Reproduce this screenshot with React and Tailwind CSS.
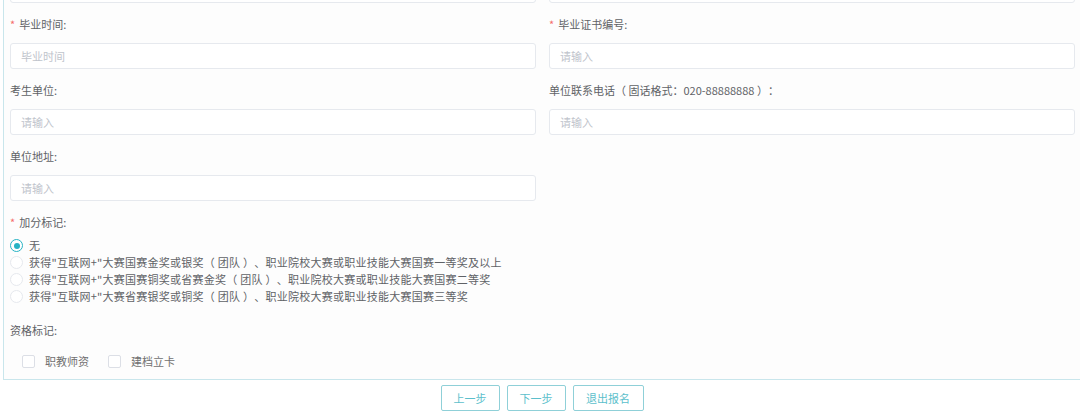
import React from 'react';

const font = { fontFamily: '"Noto Sans CJK SC", "Noto Sans", sans-serif' };

const Field = ({ label, required, placeholder }) => (
  <div className="flex flex-col">
    <div className="h-[20px] leading-[20px] text-[11px] text-[#606266] whitespace-nowrap">
      {required && <span className="text-[#f56c6c] mr-[4px]">*</span>}
      {label}
    </div>
    <div className="mt-[9px] h-[26px] border border-[#e6e9ee] rounded-[3px] bg-white flex items-center px-[10px] text-[11px] text-[#c0c4cc]">
      {placeholder}
    </div>
  </div>
);

const Radio = ({ checked, children }) => (
  <div className="h-[17px] flex items-center">
    <span
      className={`w-[13px] h-[13px] rounded-full border flex items-center justify-center bg-white ${
        checked ? 'border-[#26b3c4]' : 'border-[#e6e9ee]'
      }`}
    >
      {checked && <span className="w-[6px] h-[6px] rounded-full bg-[#26b3c4]" />}
    </span>
    <span className="ml-[6px] text-[11px] tracking-[0.25px] text-[#606266] whitespace-nowrap">{children}</span>
  </div>
);

const Check = ({ children }) => (
  <div className="flex items-center">
    <span className="w-[13px] h-[13px] border border-[#dcdfe6] rounded-[2px] bg-white" />
    <span className="ml-[10px] text-[11px] text-[#707070]">{children}</span>
  </div>
);

export default function App() {
  const options = [
    '获得"互联网+"大赛国赛金奖或银奖（ 团队 ）、职业院校大赛或职业技能大赛国赛一等奖及以上',
    '获得"互联网+"大赛国赛铜奖或省赛金奖（ 团队 ）、职业院校大赛或职业技能大赛国赛二等奖',
    '获得"互联网+"大赛省赛银奖或铜奖（ 团队 ）、职业院校大赛或职业技能大赛国赛三等奖'
  ];

  return (
    <div className="w-[1080px] h-[415px] overflow-hidden bg-white [text-spacing-trim:space-all]" style={font}>
      {/* Form panel */}
      <div className="ml-[3px] mr-[-20px] -mt-[52px] border-l border-b border-[#c9e6ec] bg-[#fdfdfd] pl-[6px] pb-[8px]">
        <div className="grid grid-cols-[526px_526px] gap-x-[13px] gap-y-[11px]">
          <Field label="" placeholder="" />
          <Field label="" placeholder="" />
          <Field label="毕业时间:" required placeholder="毕业时间" />
          <Field label="毕业证书编号:" required placeholder="请输入" />
          <Field label="考生单位:" placeholder="请输入" />
          <Field label="单位联系电话（ 固话格式：020-88888888 ）：" placeholder="请输入" />
          <Field label="单位地址:" placeholder="请输入" />
        </div>

        {/* Bonus mark */}
        <div className="mt-[11px] h-[20px] leading-[20px] text-[11px] text-[#606266]">
          <span className="text-[#f56c6c] mr-[4px]">*</span>加分标记:
        </div>
        <div className="mt-[5px] flex flex-col">
          <Radio checked>无</Radio>
          {options.map((o) => (
            <Radio key={o}>{o}</Radio>
          ))}
        </div>

        {/* Qualification */}
        <div className="mt-[15px] h-[20px] leading-[20px] text-[11px] text-[#606266]">资格标记:</div>
        <div className="mt-[11px] h-[20px] flex items-center gap-[19px] pl-[12px]">
          <Check>职教师资</Check>
          <Check>建档立卡</Check>
        </div>
      </div>

      {/* Actions */}
      <div className="mt-[5px] flex justify-center gap-[7px] pl-[4px]">
        <button className="h-[26px] w-[59px] border border-[#8fd0d8] rounded-[2px] bg-white text-[11px] text-[#5cbfcc]">上一步</button>
        <button className="h-[26px] w-[59px] border border-[#8fd0d8] rounded-[2px] bg-white text-[11px] text-[#5cbfcc]">下一步</button>
        <button className="h-[26px] w-[71px] border border-[#8fd0d8] rounded-[2px] bg-white text-[11px] text-[#5cbfcc]">退出报名</button>
      </div>
    </div>
  );
}
